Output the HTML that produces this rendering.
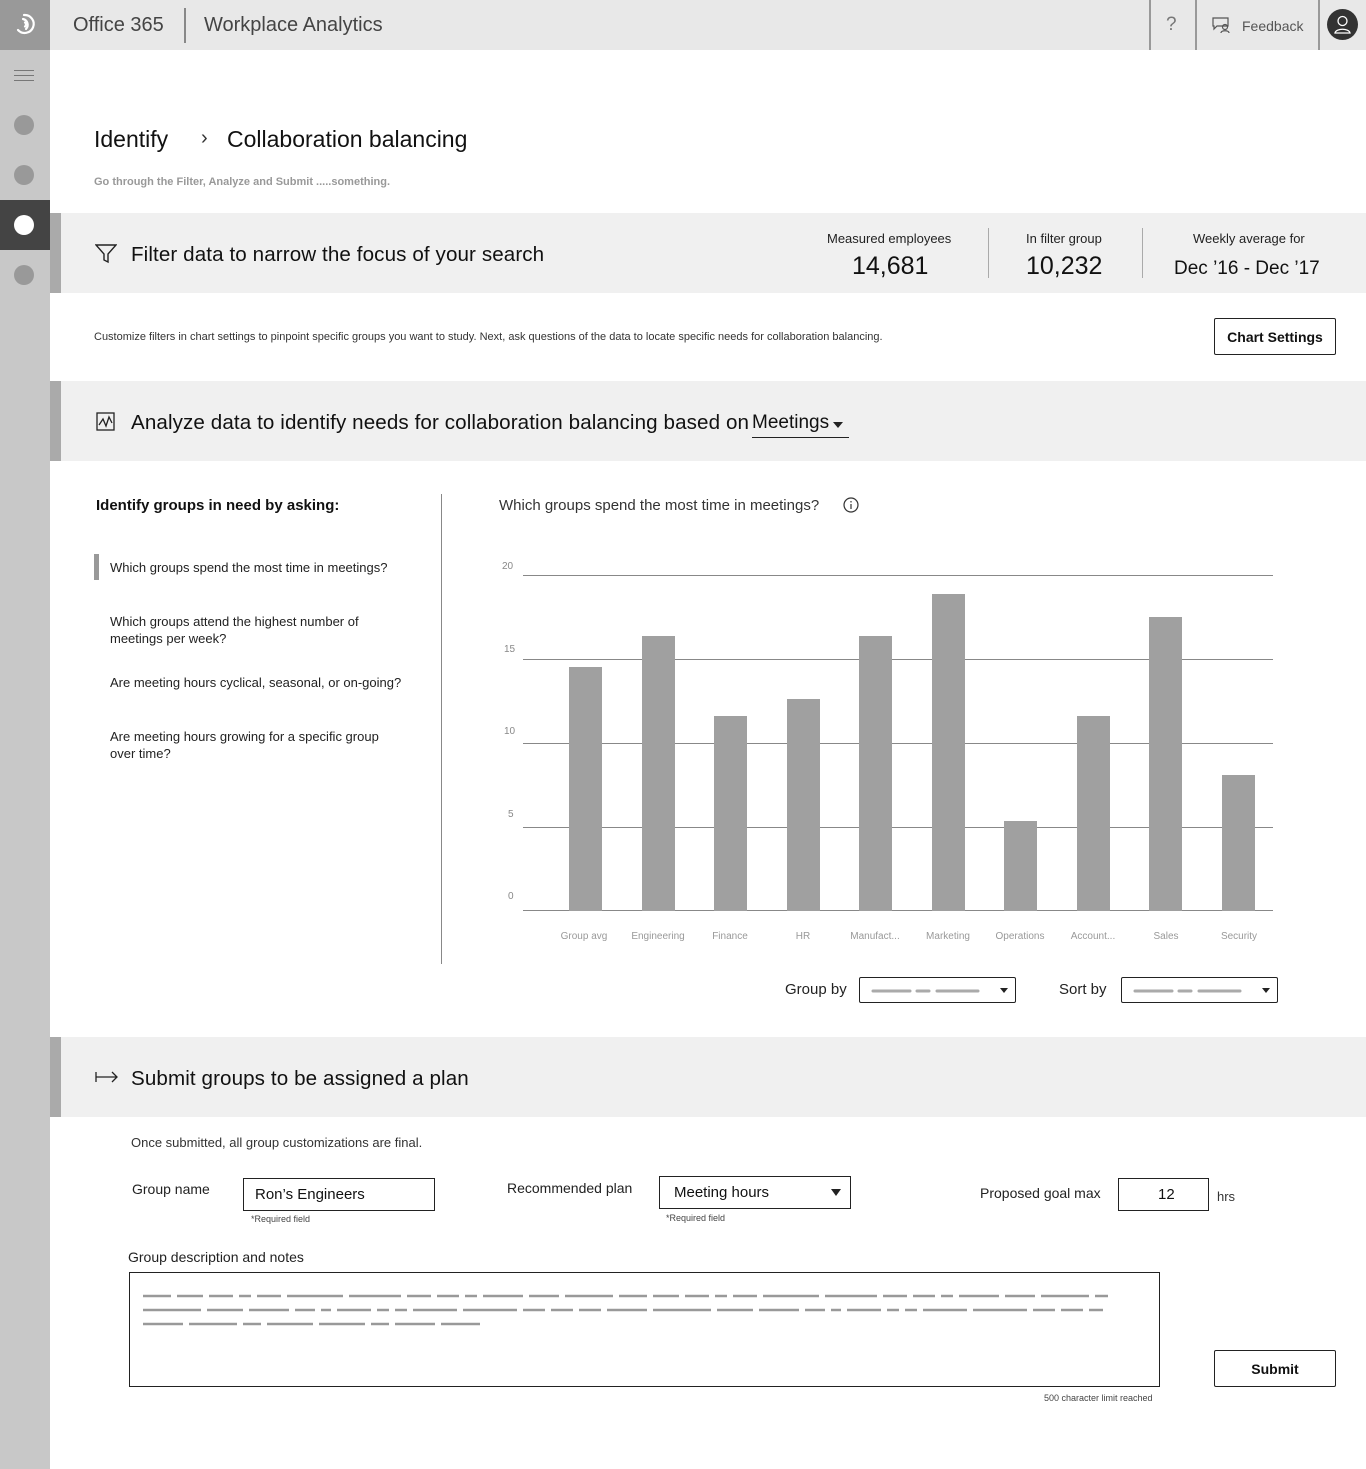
<!DOCTYPE html>
<html><head><meta charset="utf-8"><style>
*{margin:0;padding:0;box-sizing:border-box}
body{width:1366px;height:1469px;position:relative;background:#fff;font-family:"Liberation Sans",sans-serif;color:#111;overflow:hidden}
.a{position:absolute}
.band{position:absolute;left:50px;width:1316px;height:80px;background:#f0f0f0}
.band:before{content:"";position:absolute;left:0;top:0;width:11px;height:80px;background:#aaa}
.t{font-size:13px;color:#222}
.ax{font-size:10px;color:#888}
.xl{font-size:10px;color:#999;width:80px;text-align:center;top:931px}
.box{position:absolute;border:1px solid #222;border-radius:2px;background:#fff}
.h{font-size:20.6px;letter-spacing:0.1px}
</style></head><body>
<div class="a" style="left:0;top:0;width:1366px;height:50px;background:#e8e8e8"></div>
<div class="a" style="left:0;top:0;width:50px;height:50px;background:#999"></div>
<svg class="a" style="left:10px;top:10px" width="30" height="30" viewBox="0 0 30 30" fill="none" stroke="#fff" stroke-width="2.2" stroke-linecap="round"><path d="M8 20a9 9 0 1 0 6-15"/><path d="M13 9a6 6 0 0 1 3 10"/><path d="M15 12.5a2.5 2.5 0 0 1 0 4"/></svg>
<div class="a" style="left:73px;top:14px;font-size:20px;color:#444">Office 365</div>
<div class="a" style="left:184px;top:8px;width:2px;height:35px;background:#888"></div>
<div class="a" style="left:204px;top:14px;font-size:20px;color:#444">Workplace Analytics</div>
<div class="a" style="left:1149px;top:0;width:2px;height:50px;background:#999"></div>
<div class="a" style="left:1166px;top:14px;font-size:19px;color:#777">?</div>
<div class="a" style="left:1195px;top:0;width:2px;height:50px;background:#999"></div>
<svg class="a" style="left:1212px;top:17px" width="20" height="18" viewBox="0 0 20 18" fill="none" stroke="#555" stroke-width="1.2"><path d="M1 1h15v8H5l-3 3V9H1z"/><circle cx="13" cy="10" r="2.5"/><path d="M9 16c0-3 8-3 8 0"/></svg>
<div class="a" style="left:1242px;top:18px;font-size:14px;color:#555">Feedback</div>
<div class="a" style="left:1318px;top:0;width:2px;height:50px;background:#999"></div>
<div class="a" style="left:1327px;top:9px;width:31px;height:31px;border-radius:50%;background:#333"></div>
<svg class="a" style="left:1327px;top:9px" width="31" height="31" viewBox="0 0 31 31" fill="none" stroke="#fff" stroke-width="1.3"><circle cx="15.5" cy="12" r="4.5"/><path d="M8 24c1-5 14-5 15 0z"/></svg>
<div class="a" style="left:0;top:50px;width:50px;height:1419px;background:#c8c8c8"></div>
<div class="a" style="left:14px;top:70px;width:20px;height:1px;background:#777;box-shadow:0 5px 0 #777,0 10px 0 #777"></div>
<div class="a" style="left:14px;top:115px;width:20px;height:20px;border-radius:50%;background:#999"></div>
<div class="a" style="left:14px;top:165px;width:20px;height:20px;border-radius:50%;background:#999"></div>
<div class="a" style="left:0;top:200px;width:50px;height:50px;background:#444"></div>
<div class="a" style="left:14px;top:215px;width:20px;height:20px;border-radius:50%;background:#fff"></div>
<div class="a" style="left:14px;top:265px;width:20px;height:20px;border-radius:50%;background:#999"></div>
<div class="a" style="left:94px;top:126px;font-size:23px;color:#111">Identify</div>
<div class="a" style="left:201px;top:127px;font-size:20px;color:#333">&#x203A;</div>
<div class="a" style="left:227px;top:126px;font-size:23px;color:#111">Collaboration balancing</div>
<div class="a" style="left:94px;top:176px;font-size:11px;font-weight:bold;color:#999">Go through the Filter, Analyze and Submit .....something.</div>
<div class="band" style="top:213px"></div>
<svg class="a" style="left:95px;top:244px" width="22" height="20" viewBox="0 0 22 20" fill="none" stroke="#222" stroke-width="1.4"><path d="M1 1h20l-8 9v8l-4-2v-6z"/></svg>
<div class="a h" style="left:131px;top:243px">Filter data to narrow the focus of your search</div>
<div class="a t" style="left:827px;top:231px;color:#222">Measured employees</div>
<div class="a" style="left:852px;top:252px;font-size:25px">14,681</div>
<div class="a" style="left:988px;top:228px;width:1px;height:50px;background:#aaa"></div>
<div class="a t" style="left:1026px;top:231px">In filter group</div>
<div class="a" style="left:1026px;top:252px;font-size:25px">10,232</div>
<div class="a" style="left:1142px;top:228px;width:1px;height:50px;background:#aaa"></div>
<div class="a t" style="left:1193px;top:231px">Weekly average for</div>
<div class="a" style="left:1174px;top:258px;font-size:19px">Dec ’16 - Dec ’17</div>
<div class="a" style="left:94px;top:331px;font-size:11px;color:#333">Customize filters in chart settings to pinpoint specific groups you want to study. Next, ask questions of the data to locate specific needs for collaboration balancing.</div>
<div class="box" style="left:1214px;top:318px;width:122px;height:37px;font-size:14px;font-weight:bold;text-align:center;line-height:37px">Chart Settings</div>
<div class="band" style="top:381px"></div>
<svg class="a" style="left:96px;top:412px" width="20" height="20" viewBox="0 0 20 20" fill="none" stroke="#222" stroke-width="1.3"><rect x="1" y="1" width="17" height="17"/><path d="M3 13l4-6 3 7 3-9 3 6"/></svg>
<div class="a h" style="left:131px;top:411px">Analyze data to identify needs for collaboration balancing based on</div>
<div class="a" style="left:752px;top:412px;font-size:19px;border-bottom:1px solid #222;padding-right:20px;height:26px">Meetings</div>
<svg class="a" style="left:833px;top:422px" width="10" height="6"><path d="M0 0h10L5 6z" fill="#222"/></svg>
<div class="a" style="left:96px;top:497px;font-size:15px;font-weight:bold;color:#111">Identify groups in need by asking:</div>
<div class="a" style="left:94px;top:554px;width:5px;height:26px;background:#999"></div>
<div class="a t" style="left:110px;top:560px">Which groups spend the most time in meetings?</div>
<div class="a t" style="left:110px;top:613px;width:260px;line-height:17px">Which groups attend the highest number of meetings per week?</div>
<div class="a t" style="left:110px;top:675px">Are meeting hours cyclical, seasonal, or on-going?</div>
<div class="a t" style="left:110px;top:728px;width:280px;line-height:17px">Are meeting hours growing for a specific group over time?</div>
<div class="a" style="left:441px;top:494px;width:1px;height:470px;background:#888"></div>
<div class="a" style="left:499px;top:497px;font-size:15px;color:#333">Which groups spend the most time in meetings?</div>
<svg class="a" style="left:843px;top:497px" width="16" height="16" viewBox="0 0 16 16" fill="none" stroke="#333" stroke-width="1.2"><circle cx="8" cy="8" r="7"/><path d="M8 7v5M8 4v1.5"/></svg>
<svg class="a" style="left:0;top:0" width="1366" height="960">
<g stroke="#888" stroke-width="1"><path d="M523 575.5h750M523 659.5h750M523 743.5h750M523 827.5h750M523 910.5h750"/></g>
<g fill="#a0a0a0">
<rect x="569" y="667" width="33" height="244"/><rect x="642" y="636" width="33" height="275"/><rect x="714" y="716" width="33" height="195"/><rect x="787" y="699" width="33" height="212"/><rect x="859" y="636" width="33" height="275"/><rect x="932" y="594" width="33" height="317"/><rect x="1004" y="821" width="33" height="90"/><rect x="1077" y="716" width="33" height="195"/><rect x="1149" y="617" width="33" height="294"/><rect x="1222" y="775" width="33" height="136"/>
</g></svg>
<div class="a ax" style="left:502px;top:561px">20</div>
<div class="a ax" style="left:504px;top:644px">15</div>
<div class="a ax" style="left:504px;top:726px">10</div>
<div class="a ax" style="left:508px;top:809px">5</div>
<div class="a ax" style="left:508px;top:891px">0</div>
<div class="a xl" style="left:544px">Group avg</div>
<div class="a xl" style="left:618px">Engineering</div>
<div class="a xl" style="left:690px">Finance</div>
<div class="a xl" style="left:763px">HR</div>
<div class="a xl" style="left:835px">Manufact...</div>
<div class="a xl" style="left:908px">Marketing</div>
<div class="a xl" style="left:980px">Operations</div>
<div class="a xl" style="left:1053px">Account...</div>
<div class="a xl" style="left:1126px">Sales</div>
<div class="a xl" style="left:1199px">Security</div>
<div class="a" style="left:785px;top:981px;font-size:15px;color:#222">Group by</div>
<div class="box" style="left:859px;top:977px;width:157px;height:26px"></div>
<div class="a" style="left:1059px;top:981px;font-size:15px;color:#222">Sort by</div>
<div class="box" style="left:1121px;top:977px;width:157px;height:26px"></div>
<svg class="a" style="left:0;top:0" width="1366" height="1010"><g stroke="#aaa" stroke-width="3" stroke-linecap="round"><path d="M873 991h37M917 991h12M937 991h41M1135 991h37M1179 991h12M1199 991h41"/></g><path d="M1000 988h8l-4 5zM1262 988h8l-4 5z" fill="#222"/></svg>
<div class="band" style="top:1037px"></div>
<svg class="a" style="left:95px;top:1070px" width="24" height="14" viewBox="0 0 24 14" fill="none" stroke="#222" stroke-width="1.3"><path d="M1 2v10M1 7h21M17 2l5 5-5 5"/></svg>
<div class="a h" style="left:131px;top:1067px">Submit groups to be assigned a plan</div>
<div class="a" style="left:131px;top:1135px;font-size:13px;color:#333">Once submitted, all group customizations are final.</div>
<div class="a" style="left:132px;top:1181px;font-size:14px;color:#222">Group name</div>
<div class="box" style="left:243px;top:1178px;width:192px;height:33px;border-radius:0;font-size:15px;padding:7px 11px">Ron’s Engineers</div>
<div class="a" style="left:251px;top:1214px;font-size:9px;color:#444">*Required field</div>
<div class="a" style="left:507px;top:1180px;font-size:14px;color:#222">Recommended plan</div>
<div class="box" style="left:659px;top:1176px;width:192px;height:33px;border-radius:0;font-size:15px;padding:7px 14px">Meeting hours</div>
<svg class="a" style="left:831px;top:1189px" width="10" height="7"><path d="M0 0h10L5 7z" fill="#222"/></svg>
<div class="a" style="left:666px;top:1213px;font-size:9px;color:#444">*Required field</div>
<div class="a" style="left:980px;top:1185px;font-size:14px;color:#222">Proposed goal max</div>
<div class="box" style="left:1118px;top:1178px;width:91px;height:33px;border-radius:0;font-size:15px;padding:7px 0 0 39px">12</div>
<div class="a" style="left:1217px;top:1189px;font-size:13px;color:#333">hrs</div>
<div class="a" style="left:128px;top:1249px;font-size:14px;color:#222">Group description and notes</div>
<div class="box" style="left:129px;top:1272px;width:1031px;height:115px;border-radius:0"></div>
<svg class="a" style="left:0;top:0" width="1366" height="1400"><g stroke="#999" stroke-width="2.5">
<path d="M143 1296h965" stroke-dasharray="28 6 26 6 24 6 12 6 24 6 56 6 52 6 24 6 22 6 12 6 40 6 30 6 48 6"/>
<path d="M143 1310h960" stroke-dasharray="58 6 36 6 40 6 20 6 10 6 34 6 12 6 12 6 44 6 54 6 22 6 22 6 22 6 40 6"/>
<path d="M143 1324h337" stroke-dasharray="40 6 48 6 18 6 46 6 46 6 18 6"/>
</g></svg>
<div class="a" style="left:1044px;top:1393px;font-size:9px;color:#444">500 character limit reached</div>
<div class="box" style="left:1214px;top:1350px;width:122px;height:37px;font-size:14px;font-weight:bold;text-align:center;line-height:37px">Submit</div>
</body></html>
